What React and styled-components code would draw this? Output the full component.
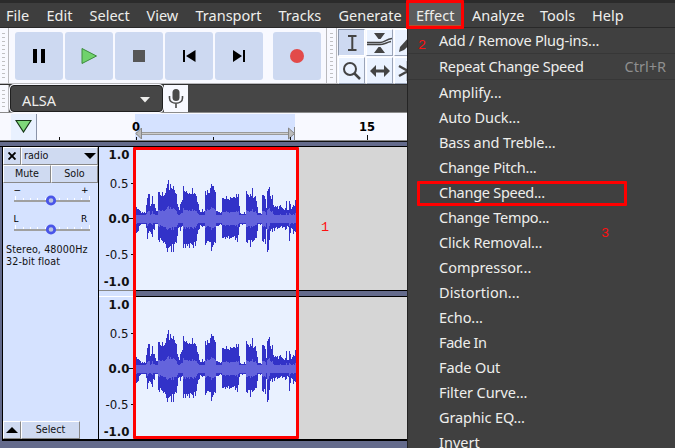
import React from "react";
import styled, { createGlobalStyle } from "styled-components";

const Global = createGlobalStyle`
  * { box-sizing: border-box; }
  body { margin: 0; background: #646b8c; overflow: hidden; }
  svg { display: block; flex: none; }
`;
const ui = `"Noto Sans", sans-serif`;
const dejavu = `"DejaVu Sans", sans-serif`;

const Window = styled.div`
  position: relative; width: 675px; height: 448px; overflow: hidden;
  display: flex; flex-direction: column; background: #646b8c; font-family: ${dejavu};
`;
const MenuBar = styled.nav`
  height: 28px; padding: 0 0 0 6px; display: flex; flex: none;
  background: #3e3e3e; border-top: 3px solid #2b2b2b; border-bottom: 1px solid #292929;
`;
const MenuTitle = styled.div`
  width: ${(p) => p.$w}px; flex: none; height: 24px; color: #eeeeec;
  font: 14.5px/25px ${ui}; white-space: nowrap;
  ${(p) => p.$open && `margin-left: -7px; padding-left: 7px; margin-right: 11px; height: 23px; background: #5c5c5c; border-bottom: 1px solid #b3532f;`}
`;
const ToolRow = styled.div`
  height: ${(p) => p.$h}px; flex: none; display: flex; background: #f8f9ff; border-bottom: 1px solid #b9b9bd;
`;
const Grabber = styled.div`
  width: ${(p) => p.$w || 9}px; flex: none; padding: 5px 3px 4px 2px; background: #f8f9ff;
  border-right: 1px solid #b9b9bd; ${(p) => p.$left && "border-left: 1px solid #b9b9bd; padding-left: 3px;"}
  &::before { content: ""; display: block; height: 100%; background: repeating-linear-gradient(#c0c0c2 0 1px, transparent 1px 4px); }
`;
const Transport = styled.div`
  display: flex; gap: 2px; padding: 4px 5px 0 6px; width: 317px; flex: none;
`;
const TransportButton = styled.button`
  width: 48px; height: 48px; flex: none; border: 0; border-radius: 3px; padding: 0; background: #cdd9f1;
  margin-left: ${(p) => p.$gap || 0}px; display: grid; place-items: center;
`;
const Tools = styled.div`
  display: grid; grid-template-columns: repeat(3, 27px); grid-template-rows: 27px 27px; gap: 1px; padding: 1px 0 0 1px;
`;
const Tool = styled.button`
  padding: 0; background: ${(p) => (p.$on ? "#cdd9f1" : "#eaf2ff")}; border: 1px solid;
  border-color: ${(p) => (p.$on ? "#8d98ac #fff #fff #8d98ac" : "#fff #9aa4b8 #9aa4b8 #fff")};
  display: grid; place-items: center;
`;
const DeviceRow = styled(ToolRow)` background: #464646; border-bottom-color: #8b8b8b; border-top: 1px solid #303030;`;
const HostSelect = styled.div`
  width: 153px; margin: 0 1px; flex: none; display: flex; align-items: center; justify-content: space-between;
  background: #464646; border: 1px solid #202020; border-radius: 4px; padding: 3px 12px 0 11px; color: #eeeeec;
  font: 14.5px/24px ${ui}; box-shadow: 0 0 0 1px #f8f9ff;
`;
const Mic = styled.div` width: 24px; background: #f8f9ff; display: grid; place-items: center; flex: none;`;
const Timeline = styled.div` height: 28px; flex: none; display: flex; background: #f8f9ff; border-bottom: 1px solid #888;`;
const Pin = styled.div` width: 26px; height: 26px; margin: 1px 0 0 11px; background: #e9f1ff; border-right: 1px solid #8a93a8; display: grid; place-items: center; padding-bottom: 3px;`;
const Ruler = styled.svg` font: bold 11.5px ${dejavu};`;
const Divider = styled.div` height: 6px; flex: none; background: #646b8c; border-top: 1px solid #111; border-bottom: 1px solid #000;`;
const Track = styled.section`
  height: 294px; flex: none; display: flex; margin-left: 2px; border-left: 1px solid #000; border-bottom: 2px solid #000; background: #d6d6d6;
`;
const Panel = styled.div`
  width: 96px; flex: none; display: flex; flex-direction: column; background: #d5e2ff; border-right: 1px solid #000;
  font: 9.6px/12px ${dejavu}; color: #111;
`;
const PanelRow = styled.div` display: flex; height: ${(p) => p.$h}px; flex: none;`;
const PanelButton = styled.button`
  width: ${(p) => p.$w}px; border: 1px solid; border-color: #fff #888 #888 #fff; background: #cfdaf1; padding: 0 ${(p) => (p.$split ? 1 : 0)}px 0 ${(p) => (p.$split ? 2 : 0)}px;
  font: 9.6px/12px ${dejavu}; color: #111; display: flex; align-items: center; justify-content: ${(p) => (p.$split ? "space-between" : "center")};
`;
const Info = styled.div` padding: 3px 0 0 3px; white-space: nowrap; flex: 1; letter-spacing: 0.1px;`;
const SliderArt = styled.svg` font: 9px ${dejavu};`;
const Scales = styled.div` width: 35px; flex: none; background: #d5e2ff;`;
const ScaleArt = styled.svg` font: 12px ${dejavu};`;
const Clips = styled.div` width: 164px; flex: none; background: #e9f1ff; border-right: 1px solid #999;`;
const ChannelGap = styled.div` height: 7px; width: 276px; background: #646b8c; border: solid #000; border-width: 1px 0;`;

const Popup = styled.div`
  position: absolute; left: 407px; top: 28px; width: 268px; height: 420px; background: #404040; border-left: 1px solid #242424;
  display: flex; flex-direction: column; overflow: hidden;
`;
const Item = styled.div`
  height: 25px; flex: none; display: flex; justify-content: space-between; padding: 0 9px 0 31px; color: #eeeeec;
  font: 14.5px/25px ${ui}; letter-spacing: ${(p) => p.$ls || 0}px; white-space: nowrap;
`;
const Shortcut = styled.span` color: #8f8f8f; letter-spacing: 0;`;
const Separator = styled.div` height: 1px; flex: none; background: #373737;`;
const Frame = styled.div`
  position: absolute; left: ${(p) => p.$x}px; top: ${(p) => p.$y}px; width: ${(p) => p.$w}px; height: ${(p) => p.$h}px; border: 3px solid #f00; border-radius: 1px;
`;
const Mark = styled.div`
  position: absolute; left: ${(p) => p.$x}px; top: ${(p) => p.$y}px; color: #ff1010; font: 13.5px/14px "Liberation Mono", monospace;
`;

const UP = [12,10,10,9,8,6,7,6,7,6,14,21,25,25,13,15,23,15,15,11,8,8,27,27,24,23,27,23,24,26,31,35,39,29,35,31,30,33,29,26,25,15,12,9,15,17,19,33,28,27,28,26,25,26,25,25,31,25,26,25,23,17,15,9,7,7,10,7,8,28,24,29,26,26,31,35,33,33,29,27,8,8,7,7,6,7,21,21,20,20,23,20,20,19,22,21,21,22,22,21,25,22,25,13,6,5,5,5,7,5,28,25,24,22,25,23,31,21,22,23,18,12,6,6,6,5,24,24,23,20,11,28,30,32,23,20,24,14,12,13,12,13,10,13,14,12,11,10,9,11,18,9,9,18,15,10,12,14,13,19];
const DOWN = [14,13,12,7,6,5,5,5,5,5,9,20,14,12,13,15,18,10,11,5,5,5,21,23,19,21,22,24,23,25,29,33,29,28,27,33,25,33,25,23,24,17,9,8,12,8,7,29,25,29,25,27,25,29,24,25,26,29,23,27,22,15,11,10,6,7,8,7,7,26,24,22,22,23,23,32,28,26,23,24,7,7,7,6,5,6,19,19,18,20,18,19,17,20,19,19,18,18,17,21,19,23,16,8,5,5,6,5,5,5,23,24,21,21,28,21,23,22,21,19,19,12,5,5,6,5,22,23,20,25,10,33,31,21,12,10,13,9,12,9,8,10,9,9,8,7,9,8,8,11,10,7,8,22,14,9,10,15,12,13];
const bars = (f) => UP.map((u, i) => {
  const a = f(u), b = f(DOWN[i]);
  return `M${i + 2} ${72 - a}h1v${a + b}h-1z`;
}).join("");
const PEAK = bars((v) => v);
const RMS = bars((v) => Math.max(4, Math.round(v * 0.33)));

const Wave = () => (
  <svg width="163" height="143" shapeRendering="crispEdges">
    <path d={PEAK} fill="#3232c8" />
    <path d={RMS} fill="#6464dc" />
  </svg>
);
const Scale = ({ h, line }) => (
  <ScaleArt width="35" height={h}>
    <g textAnchor="end" fill="#111">
      <g fontWeight="bold" fontSize="11.8"><text x="30.5" y="12.3">1.0</text><text x="30.5" y="76">0.0</text><text x="30.5" y="139">-1.0</text></g>
      <g fontSize="11.8"><text x="29.5" y="40.5">0.5</text><text x="29.5" y="111.5">-0.5</text></g>
    </g>
    <path d="M32 36.5h3M29.5 71.5h6M32 107.5h3" stroke="#111" />
    {line && <path d="M0 143.5h35" stroke="#888" />}
    {line && <path d="M0 149.5h35" stroke="#fff" />}
  </ScaleArt>
);
const Slider = ({ a, b }) => (
  <SliderArt width="95" height="29">
    <text x="10.5" y="10" fill="#000">{a}</text><text x="78" y="10" fill="#000">{b}</text>
    <path d="M12.5 13v5M20.5 15v3M27.5 15v3M34.5 15v3M42.5 15v3M56.5 15v3M64.5 15v3M71.5 15v3M78.5 15v3M86.5 13v5" stroke="#fff" />
    <path d="M11 18h76" stroke="#a0a0a0" strokeWidth="2" />
    <circle cx="48" cy="17.500" r="3.700" fill="#b9c4e0" stroke="#4a55e8" strokeWidth="2.800" />
  </SliderArt>
);
const menus = [["File", 40.5], ["Edit", 43], ["Select", 57], ["View", 49], ["Transport", 83], ["Tracks", 60], ["Generate", 77.5], ["Effect", 52, 1], ["Analyze", 68], ["Tools", 52], ["Help", 50]];
const effects = [["Amplify..."], ["Auto Duck...", -0.08], ["Bass and Treble...", -0.12], ["Change Pitch...", -0.27], ["Change Speed...", -0.27], ["Change Tempo...", -0.27], ["Click Removal...", -0.12], ["Compressor..."], ["Distortion...", 0.08], ["Echo...", -0.1], ["Fade In", -0.4], ["Fade Out", -0.1], ["Filter Curve...", -0.08], ["Graphic EQ...", -0.1], ["Invert"]];

export default function App() {
  return (
    <Window>
      <Global />
      <MenuBar>{menus.map(([t, w, open]) => <MenuTitle key={t} $w={w} $open={open}>{t}</MenuTitle>)}</MenuBar>
      <ToolRow $h={56}>
        <Grabber />
        <Transport>
          <TransportButton><svg width="14" height="14"><path d="M1 0h4v14H1zM9 0h4v14H9z" /></svg></TransportButton>
          <TransportButton><svg width="18" height="18"><path d="M2 1.5v15L16.5 9z" fill="#70d26c" stroke="#3c8c3c" /></svg></TransportButton>
          <TransportButton><svg width="12" height="12"><path d="M0 0h12v12H0z" fill="#565656" /></svg></TransportButton>
          <TransportButton><svg width="14" height="14"><path d="M1 1h2v12H1zM13.5 1v12L4 7z" /></svg></TransportButton>
          <TransportButton><svg width="14" height="14"><path d="M11 1h2v12h-2zM1 1v12l9-6z" /></svg></TransportButton>
          <TransportButton $gap={8}><svg width="14" height="14"><circle cx="7" cy="7" r="7" fill="#e24a4a" /></svg></TransportButton>
        </Transport>
        <Grabber $w={11} $left />
        <Tools>
          <Tool $on><svg width="20" height="20" fill="none" stroke="#444" strokeWidth="2"><path d="M6 3h8.500M10.300 3v14M6 17h8.500" /></svg></Tool>
          <Tool><svg width="25" height="22"><path d="M7 1h11l-4.500 6h-2zM7 21h11l-4.500-6h-2z" fill="#444" /><path d="M0 10.500h13c4 0 6-3 12-4M0 12.500h13c4 0 6-2 11-3" fill="none" stroke="#444" strokeWidth="1.600" /></svg></Tool>
          <Tool><svg width="25" height="22"><path d="M4 20l1-5L15 4l5 4L9 18z" fill="#444" /></svg></Tool>
          <Tool><svg width="22" height="22" fill="none" stroke="#444"><circle cx="9" cy="9" r="6" strokeWidth="2" /><path d="M13 13l6 6" strokeWidth="2.500" /></svg></Tool>
          <Tool><svg width="22" height="16" fill="#444"><path d="M1 8l6-6v4.500h8V2l6 6-6 6V9.500H7V14z" /></svg></Tool>
          <Tool><svg width="24" height="22" fill="none" stroke="#444" strokeWidth="2.500"><path d="M12 1v20M3 6l18 10M3 16L21 6" /></svg></Tool>
        </Tools>
      </ToolRow>
      <DeviceRow $h={29}>
        <Grabber />
        <HostSelect>ALSA<svg width="10" height="6"><path d="M0 0h10L5 5.500z" fill="#eeeeec" /></svg></HostSelect>
        <Mic><svg width="16" height="22" fill="none" stroke="#4a4a4a"><rect x="4.500" y="1" width="7" height="12" rx="3.500" fill="#4a4a4a" stroke="none" /><path d="M1.500 8v2c0 7 13 7 13 0V8M8 15v5" strokeWidth="1.600" /></svg></Mic>
      </DeviceRow>
      <Timeline>
        <Pin><svg width="17" height="14"><path d="M1 1.500h15L8.500 13z" fill="#7ed87a" stroke="#173817" strokeWidth="1.200" /></svg></Pin>
        <Ruler width="638" height="27">
          <path d="M98 1h160v26H98z" fill="#d5e2ff" />
          <path d="M99 20.500h159" stroke="#999" strokeWidth="3" /><path d="M99 20.500h159" stroke="#ccc" />
          <path d="M104.500 15v11L99 20.500zM251.500 15v11l6-5.500z" fill="#bbb" stroke="#888" /><path d="M257.500 14v13" stroke="#888" />
          <path d="M22.500 24v3M99.500 24v3M176.500 24v3M253.500 24v3M330.500 22v5" stroke="#111" />
          <text x="95" y="18">0</text><text x="322" y="18">15</text>
        </Ruler>
      </Timeline>
      <Divider />
      <Track>
        <Panel>
          <PanelRow $h={18}>
            <PanelButton $w={18}><svg width="8" height="8"><path d="M.5.5l7 7M7.500.5l-7 7" stroke="#000" strokeWidth="1.900" /></svg></PanelButton>
            <PanelButton $w={77} $split>radio<svg width="12" height="6"><path d="M0 0h12L6 6z" /></svg></PanelButton>
          </PanelRow>
          <PanelRow $h={18}><PanelButton $w={48}>Mute</PanelButton><PanelButton $w={47}>Solo</PanelButton></PanelRow>
          <Slider a="−" b="+" />
          <Slider a="L" b="R" />
          <Info>Stereo, 48000Hz<br />32-bit float</Info>
          <PanelRow $h={18}>
            <PanelButton $w={18}><svg width="12" height="6"><path d="M0 6h12L6 0z" /></svg></PanelButton>
            <PanelButton $w={59}>Select</PanelButton>
          </PanelRow>
        </Panel>
        <Scales><Scale h={150} line /><Scale h={142} /></Scales>
        <Clips><Wave /><ChannelGap /><Wave /></Clips>
      </Track>
      <Popup>
        <Item $ls={-0.2}>Add / Remove Plug-ins...</Item>
        <Separator />
        <Item $ls={-0.27}>Repeat Change Speed<Shortcut>Ctrl+R</Shortcut></Item>
        <Separator />
        {effects.map(([t, ls]) => <Item key={t} $ls={ls}>{t}</Item>)}
      </Popup>
      <Frame $x={133} $y={147} $w={166} $h={292} />
      <Frame $x={406} $y={0} $w={58} $h={29} />
      <Frame $x={417} $y={181} $w={210} $h={25} />
      <Mark $x={321} $y={221}>1</Mark>
      <Mark $x={418} $y={39}>2</Mark>
      <Mark $x={601} $y={227}>3</Mark>
    </Window>
  );
}
